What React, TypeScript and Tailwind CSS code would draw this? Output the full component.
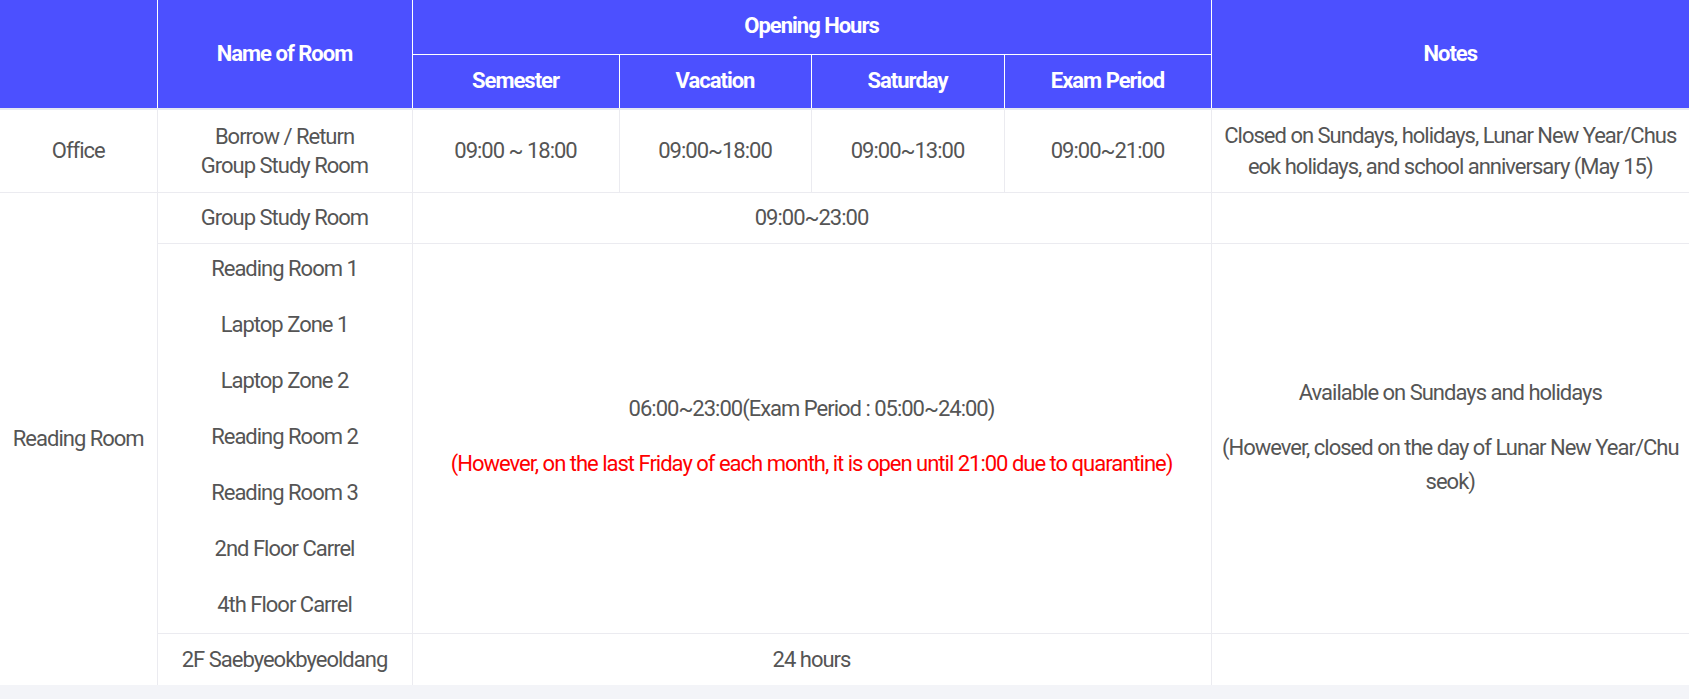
import React from "react";

const th = "border border-white bg-[#4c50ff] text-white font-bold text-[22px] tracking-[-1px] text-center align-middle p-0";
const td = "border border-[#ebebf0] text-center align-middle p-0 text-[22px] tracking-[-1px] text-[#555555]";

export default function App() {
  const names = [
    "Reading Room 1",
    "Laptop Zone 1",
    "Laptop Zone 2",
    "Reading Room 2",
    "Reading Room 3",
    "2nd Floor Carrel",
    "4th Floor Carrel",
  ];
  return (
    <div className="min-h-[699px] w-full bg-[#f3f4f8]" style={{ fontFamily: "Roboto, 'Noto Sans', sans-serif" }}>
      <table className="w-[1689px] table-fixed border-collapse bg-white">
        <colgroup>
          <col className="w-[157px]" />
          <col className="w-[255px]" />
          <col className="w-[207px]" />
          <col className="w-[192px]" />
          <col className="w-[193px]" />
          <col className="w-[207px]" />
          <col className="w-[478px]" />
        </colgroup>
        <thead>
          <tr className="h-[54px]">
            <th rowSpan={2} className={`${th} border-l-0 border-t-0 border-b-2 border-b-[#e6e8f2]`}></th>
            <th rowSpan={2} className={`${th} border-t-0 border-b-2 border-b-[#e6e8f2] pb-[2px]`}>Name of Room</th>
            <th colSpan={4} className={`${th} border-t-0 pb-[3px]`}>Opening Hours</th>
            <th rowSpan={2} className={`${th} border-r-0 border-t-0 border-b-2 border-b-[#e6e8f2] pb-[2px]`}>Notes</th>
          </tr>
          <tr className="h-[55px]">
            <th className={`${th} border-b-2 border-b-[#e6e8f2] pb-[2px]`}>Semester</th>
            <th className={`${th} border-b-2 border-b-[#e6e8f2] pb-[2px]`}>Vacation</th>
            <th className={`${th} border-b-2 border-b-[#e6e8f2] pb-[2px]`}>Saturday</th>
            <th className={`${th} border-b-2 border-b-[#e6e8f2] pb-[2px]`}>Exam Period</th>
          </tr>
        </thead>
        <tbody>
          <tr className="h-[83px]">
            <td className={`${td} border-l-0`}>Office</td>
            <td className={`${td} leading-[29px]`}>
              Borrow / Return
              <br />
              Group Study Room
            </td>
            <td className={td}>09:00 ~ 18:00</td>
            <td className={td}>09:00~18:00</td>
            <td className={td}>09:00~13:00</td>
            <td className={td}>09:00~21:00</td>
            <td className={`${td} border-r-0 leading-[31px] whitespace-nowrap`}>
              Closed on Sundays, holidays, Lunar New Year/Chus
              <br />
              eok holidays, and school anniversary (May 15)
            </td>
          </tr>
          <tr className="h-[51px]">
            <td rowSpan={3} className={`${td} border-l-0 border-b-0`}>Reading Room</td>
            <td className={td}>Group Study Room</td>
            <td colSpan={4} className={td}>09:00~23:00</td>
            <td className={`${td} border-r-0`}></td>
          </tr>
          <tr className="h-[390px]">
            <td className={td}>
              <div className="flex flex-col gap-[22px] leading-[34px] pb-[2px]">
                {names.map((n) => (
                  <p key={n}>{n}</p>
                ))}
              </div>
            </td>
            <td colSpan={4} className={td}>
              <div className="flex flex-col gap-[21px] leading-[34px] pb-[4px]">
                <p>06:00~23:00(Exam Period : 05:00~24:00)</p>
                <p className="text-[#ff0000]">
                  (However, on the last Friday of each month, it is open until 21:00 due to quarantine)
                </p>
              </div>
            </td>
            <td className={`${td} border-r-0`}>
              <div className="flex flex-col gap-[21px] leading-[34px] whitespace-nowrap pb-[2px]">
                <p>Available on Sundays and holidays</p>
                <p>
                  (However, closed on the day of Lunar New Year/Chu
                  <br />
                  seok)
                </p>
              </div>
            </td>
          </tr>
          <tr className="h-[52px]">
            <td className={`${td} border-b-0`}>2F Saebyeokbyeoldang</td>
            <td colSpan={4} className={`${td} border-b-0`}>24 hours</td>
            <td className={`${td} border-r-0 border-b-0`}></td>
          </tr>
        </tbody>
      </table>
    </div>
  );
}
